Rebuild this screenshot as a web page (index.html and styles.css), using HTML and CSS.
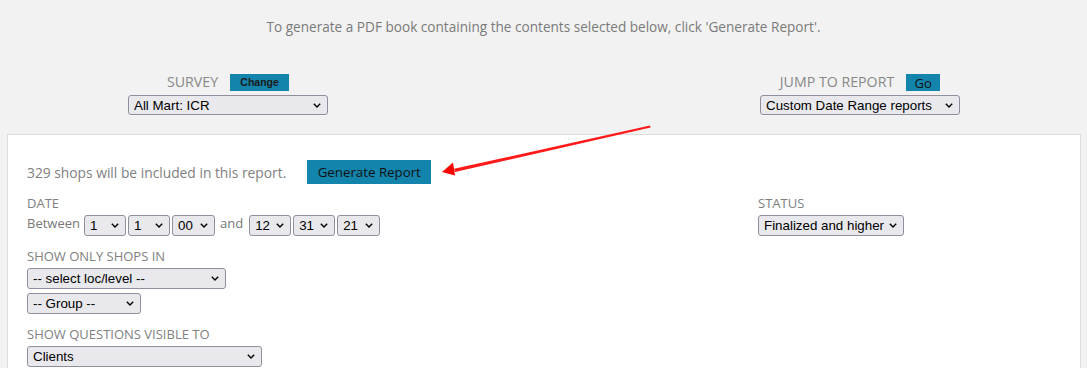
FILE: index.html
```html
<!DOCTYPE html>
<html>
<head>
<meta charset="utf-8">
<link rel="stylesheet" href="styles.css">
</head>
<body>
<p class="intro">To generate a PDF book containing the contents selected below, click 'Generate Report'.</p>
<div class="pickers">
  <div class="picker">
    <div class="picker-head"><span class="picker-label">SURVEY</span><button class="btn btn-small">Change</button></div>
    <select class="sel sel-survey"><option>All Mart: ICR</option></select>
  </div>
  <div class="picker">
    <div class="picker-head"><span class="picker-label">JUMP TO REPORT</span><button class="btn btn-go">Go</button></div>
    <select class="sel sel-jump"><option>Custom Date Range reports</option></select>
  </div>
</div>
<div class="panel">
  <div class="gen-row">
    <span class="count">329 shops will be included in this report.</span>
    <button class="btn btn-gen">Generate Report</button>
  </div>
  <div class="cols">
    <div class="col-left">
      <div class="label">DATE</div>
      <div class="date-row">
        <span class="word">Between</span>
        <select class="sel sel-sm"><option>1</option></select>
        <select class="sel sel-sm"><option>1</option></select>
        <select class="sel sel-sm"><option>00</option></select>
        <span class="word word-and">and</span>
        <select class="sel sel-sm"><option>12</option></select>
        <select class="sel sel-sm"><option>31</option></select>
        <select class="sel sel-sm"><option>21</option></select>
      </div>
      <div class="label label-gap">SHOW ONLY SHOPS IN</div>
      <select class="sel sel-loc"><option>-- select loc/level --</option></select>
      <select class="sel sel-group"><option>-- Group --</option></select>
      <div class="label label-gap2">SHOW QUESTIONS VISIBLE TO</div>
      <select class="sel sel-clients"><option>Clients</option></select>
    </div>
    <div class="col-right">
      <div class="label">STATUS</div>
      <select class="sel sel-status"><option>Finalized and higher</option></select>
    </div>
  </div>
</div>
<svg class="arrow" width="230" height="60" viewBox="430 120 230 60" xmlns="http://www.w3.org/2000/svg">
  <path d="M650 125.6 L650.6 127.4 L455 172 L454 168.8 Z" fill="#ff1a1a"/>
  <path d="M442 172 L453 162.5 L455 175.5 Z" fill="#ff0000"/>
</svg>
</body>
</html>
```
FILE: styles.css
```css
html, body {
  margin: 0;
  padding: 0;
}
body {
  background: #f2f2f2;
  font-family: "Open Sans", "Liberation Sans", sans-serif;
  color: #777;
  font-size: 13px;
  position: relative;
  height: 368px;
  overflow: hidden;
}
.intro {
  margin: 0;
  padding-top: 18px;
  line-height: 18px;
  text-align: center;
  color: #7a7a7a;
  font-size: 13.6px;
}
.pickers {
  display: flex;
  justify-content: space-between;
  padding: 0 127px 0 128px;
  margin-top: 37px;
}
.picker {
  display: flex;
  flex-direction: column;
  align-items: center;
  width: 200px;
}
.picker-head {
  display: flex;
  align-items: center;
  height: 18px;
  margin-bottom: 4px;
}
.picker-label {
  font-size: 14.2px;
  color: #888;
  margin-right: 12px;
  line-height: 18px;
}
.btn {
  border: 0;
  background: #1384ab;
  color: #111;
  font-family: "Open Sans", "Liberation Sans", sans-serif;
  padding: 0;
  cursor: pointer;
}
.btn-small {
  width: 59px;
  height: 17px;
  font-size: 10.5px;
  font-weight: 700;
  font-family: "Liberation Sans", Arial, sans-serif;
  color: #1a1a1a;
}
.btn-go {
  width: 34px;
  height: 17px;
  font-size: 13px;
}
.sel {
  -webkit-appearance: none;
  appearance: none;
  font-family: "Liberation Sans", Arial, sans-serif;
  font-size: 13.33px;
  height: 21px;
  color: #000;
  background-color: #e9e9ed;
  background-image: url("data:image/svg+xml;utf8,<svg xmlns='http://www.w3.org/2000/svg' width='8' height='5' viewBox='0 0 8 5'><path d='M0.8 0.8 L4 4 L7.2 0.8' fill='none' stroke='black' stroke-width='1.4'/></svg>");
  background-repeat: no-repeat;
  background-position: right 6px center;
  border: 1px solid #8f8f9d;
  border-radius: 3px;
  padding: 0 18px 0 5px;
  margin: 0;
}
.sel-survey, .sel-jump {
  width: 200px;
  height: 20px;
}
.panel {
  margin: 19px 6px 0 7px;
  background: #fff;
  border: 1px solid #dcdcdc;
  padding: 25px 19px 20px 19px;
}
.gen-row {
  display: flex;
  align-items: center;
  height: 24px;
}
.count {
  color: #808080;
  margin-right: 21px;
  font-size: 13.8px;
}
.btn-gen {
  width: 124px;
  height: 24px;
  font-size: 13.3px;
}
.cols {
  display: flex;
  margin-top: 11px;
}
.col-left {
  flex: 0 0 731px;
  display: flex;
  flex-direction: column;
  align-items: flex-start;
}
.col-right {
  display: flex;
  flex-direction: column;
  align-items: flex-start;
}
.label {
  line-height: 16px;
  height: 16px;
  color: #808080;
}
.date-row {
  display: flex;
  align-items: flex-start;
  gap: 2px;
  margin-top: 4px;
}
.word {
  line-height: 16px;
  margin-right: 2px;
}
.word-and {
  margin: 0 4px 0 3px;
}
.sel-sm {
  width: 42px;
}
.sel-sm:nth-of-type(3), .sel-sm:nth-of-type(6) {
  width: 43px;
}
.col-right .sel-status {
  margin-top: 4px;
  width: 146px;
}
.label-gap {
  margin-top: 12px;
}
.sel-loc {
  margin-top: 4px;
  width: 199px;
}
.sel-group {
  margin-top: 4px;
  width: 114px;
}
.label-gap2 {
  margin-top: 12px;
}
.sel-clients {
  margin-top: 4px;
  width: 235px;
}
.arrow {
  position: absolute;
  left: 430px;
  top: 120px;
}
```
